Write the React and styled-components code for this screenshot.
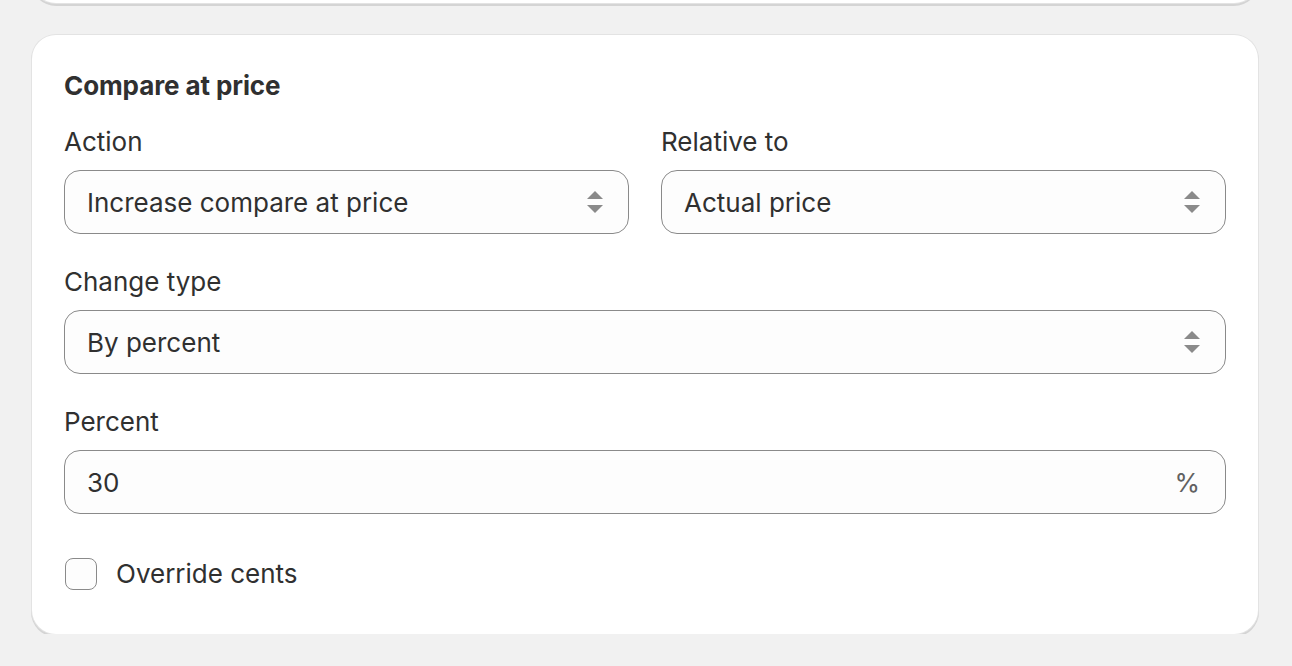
import styled, { createGlobalStyle } from "styled-components";

const GlobalStyle = createGlobalStyle`
  body {
    margin: 0;
    background: #f1f1f1;
    font-family: Inter, "Noto Sans", sans-serif;
    color: #303030;
  }
`;

const Page = styled.div`
  padding: 0 34px 0 32px;
  display: flex;
  flex-direction: column;
  gap: 32px;
`;

const Card = styled.div`
  background: #ffffff;
  border-radius: 24px;
  box-shadow: 0 0 0 1px #e3e3e3, 0 2px 0 1px #d4d4d4;
`;

const PrevCard = styled(Card)`
  height: 60px;
  margin-top: -57px;
`;

const Section = styled(Card)`
  padding: 31px 32px 40px;
  display: flex;
  flex-direction: column;
`;

const Heading = styled.h2`
  margin: 0 0 16px;
  font-size: 26px;
  line-height: 40px;
  font-weight: 650;
  letter-spacing: -0.1px;
`;

const Row = styled.div`
  display: grid;
  grid-template-columns: 1fr 1fr;
  gap: 32px;
  margin-bottom: 28px;
`;

const Field = styled.div`
  display: flex;
  flex-direction: column;
  margin-bottom: ${(p) => p.$mb || 0}px;
`;

const Label = styled.label`
  font-size: 26px;
  line-height: 40px;
  margin-bottom: 8px;
`;

const Control = styled.div`
  height: 64px;
  box-sizing: border-box;
  border: 1px solid #8a8a8a;
  border-radius: 16px;
  background: #fdfdfd;
  display: flex;
  align-items: center;
  justify-content: space-between;
  padding: 0 ${(p) => p.$pr || 24}px 0 22px;
  font-size: 26px;
`;

const Suffix = styled.span`
  color: #616161;
  font-size: 26px;
`;

const CheckRow = styled.label`
  display: flex;
  align-items: center;
  gap: 19px;
  font-size: 26px;
  line-height: 40px;
  margin-top: 40px;
  padding-left: 1px;
`;

const Box = styled.span`
  width: 32px;
  height: 32px;
  box-sizing: border-box;
  border: 1px solid #8a8a8a;
  border-radius: 8px;
  background: #fdfdfd;
`;

const Arrows = () => (
  <svg width="18" height="26" viewBox="0 0 18 26" fill="#8a8a8a">
    <path d="M9 2 L17 10 L1 10 Z" />
    <path d="M1 16 L17 16 L9 24 Z" />
  </svg>
);

const Select = ({ value }) => (
  <Control>
    <span>{value}</span>
    <Arrows />
  </Control>
);

export default function App() {
  return (
    <>
      <GlobalStyle />
      <Page>
        <PrevCard />
        <Section>
          <Heading>Compare at price</Heading>
          <Row>
            <Field>
              <Label>Action</Label>
              <Select value="Increase compare at price" />
            </Field>
            <Field>
              <Label>Relative to</Label>
              <Select value="Actual price" />
            </Field>
          </Row>
          <Field $mb={28}>
            <Label>Change type</Label>
            <Select value="By percent" />
          </Field>
          <Field>
            <Label>Percent</Label>
            <Control $pr={25}>
              <span>30</span>
              <Suffix>%</Suffix>
            </Control>
          </Field>
          <CheckRow>
            <Box />
            Override cents
          </CheckRow>
        </Section>
      </Page>
    </>
  );
}
